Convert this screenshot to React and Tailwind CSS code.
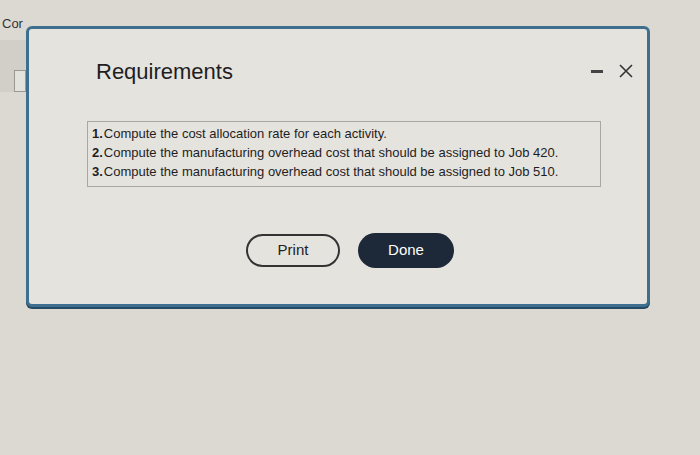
export default function App() {
  return (
    <div
      className="relative w-[700px] h-[455px] overflow-hidden bg-[#dcd9d3]"
      style={{ fontFamily: '"Liberation Sans", Arial, sans-serif' }}
    >
      {/* background page bits */}
      <div className="absolute left-[2px] top-[14px] text-[13px] text-[#333]">Cor</div>
      <div className="absolute left-0 top-[40px] w-[26px] h-[52px] bg-[#d2cfc9]" />
      <div className="absolute left-[14px] top-[70px] w-[12px] h-[22px] border border-[#9a9893] bg-[#e4e2dd]" />

      {/* dialog */}
      <div className="absolute left-[26px] top-[26px] w-[624px] h-[281px] rounded-[6px] border-[3px] border-[#3f6f8e] bg-[#e5e3de] shadow-[0_2px_0_#254a63]">
        <div className="flex items-start justify-between pl-[67px] pr-[13px] pt-[30px]">
          <div className="text-[22px] leading-[26px] text-[#1e1e1e]">Requirements</div>
          <div className="flex items-center gap-[15px] pt-[4px]">
            <div className="w-[12px] h-[3px] bg-[#444]" />
            <svg width="16" height="16" viewBox="0 0 16 16">
              <path d="M2 2 L14 14 M14 2 L2 14" stroke="#333" strokeWidth="1.6" fill="none" />
            </svg>
          </div>
        </div>
        <div className="ml-[58px] mr-[46px] mt-[36px] border border-[#a9a7a2] px-[4px] pt-[2px] pb-[5px] text-[13px] leading-[19px] text-[#1e1e1e]">
          <div><b className="mr-[1px]">1.</b>Compute the cost allocation rate for each activity.</div>
          <div><b className="mr-[1px]">2.</b>Compute the manufacturing overhead cost that should be assigned to Job 420.</div>
          <div><b className="mr-[1px]">3.</b>Compute the manufacturing overhead cost that should be assigned to Job 510.</div>
        </div>
        <div className="flex justify-center gap-[18px] mt-[47px] pl-[24px]">
          <button className="w-[94px] h-[33px] rounded-full border-[2px] border-[#333] text-[15px] text-[#222]">Print</button>
          <button className="w-[96px] h-[35px] -mt-[1px] rounded-full bg-[#1d2838] text-[15px] text-white">Done</button>
        </div>
      </div>
    </div>
  );
}
